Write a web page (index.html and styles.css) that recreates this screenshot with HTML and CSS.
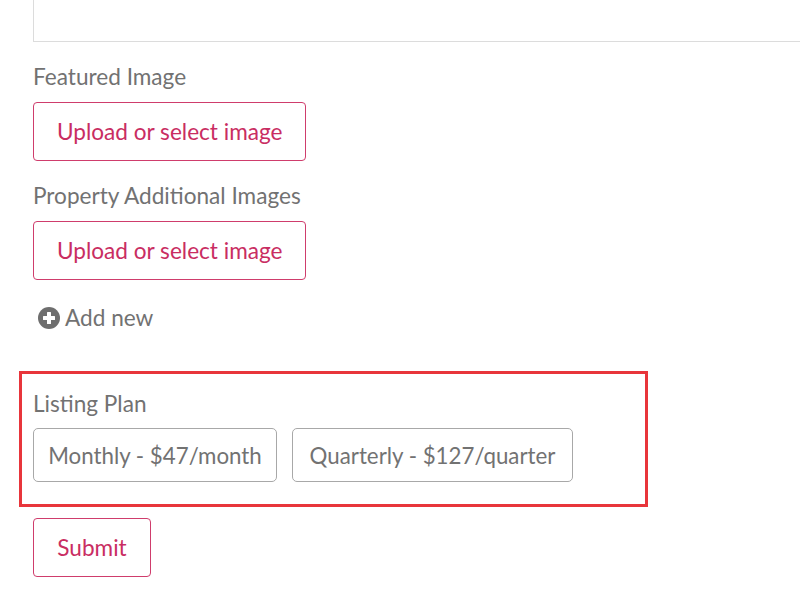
FILE: index.html
```html
<!DOCTYPE html>
<html>
<head>
<meta charset="utf-8">
<link rel="stylesheet" href="styles.css">
</head>
<body>
<div class="form">
  <div class="textarea"></div>
  <div class="label first">Featured Image</div>
  <button class="btn-upload">Upload or select image</button>
  <div class="label">Property Additional Images</div>
  <button class="btn-upload">Upload or select image</button>
  <div class="add-new">
    <svg class="plus" width="22" height="22" viewBox="0 0 22 22"><circle cx="11" cy="11" r="11" fill="#6e6e6e"/><rect x="5" y="9" width="12" height="4" rx="0.5" fill="#fff"/><rect x="9" y="5" width="4" height="12" rx="0.5" fill="#fff"/></svg>
    <span>Add new</span>
  </div>
  <div class="plan-box">
    <div class="label plan-label">Listing Plan</div>
    <div class="plans">
      <button class="plan monthly">Monthly - $47/month</button>
      <button class="plan quarterly">Quarterly - $127/quarter</button>
    </div>
  </div>
  <button class="btn-upload submit">Submit</button>
</div>
</body>
</html>
```

FILE: styles.css
```css
html, body {
  margin: 0;
  padding: 0;
  background: #fff;
  overflow: hidden;
}
body {
  font-family: Lato, "Liberation Sans", sans-serif;
  font-size: 22.6px;
  color: #727272;
}
.form {
  padding-left: 33px;
  display: flex;
  flex-direction: column;
  align-items: flex-start;
}
.textarea {
  margin-top: -60px;
  height: 102px;
  width: 800px;
  border: 1px solid #dcdcdc;
  box-sizing: border-box;
}
.label {
  line-height: 30px;
  margin-top: 20px;
  margin-bottom: 10px;
}
.btn-upload {
  font-family: inherit;
  font-size: 22.6px;
  color: #c92d62;
  background: #fff;
  border: 1.5px solid #cf3d6c;
  border-radius: 4px;
  height: 59px;
  padding: 0 23px;
  box-sizing: border-box;
  cursor: pointer;
}
.add-new {
  margin-top: 23px;
  display: flex;
  align-items: center;
  gap: 5px;
  line-height: 30px;
  padding-left: 5px;
}
.plus {
  display: block;
}
.plan-box {
  margin-top: 38px;
  margin-left: -14px;
  width: 629px;
  box-sizing: border-box;
  border: 3px solid #e8353b;
  padding: 0 11px 22px;
}
.plan-label {
  margin-top: 15px;
  margin-bottom: 9px;
}
.plans {
  display: flex;
  gap: 15px;
}
.plan {
  font-family: inherit;
  font-size: 22.3px;
  color: #727272;
  background: #fff;
  border: 1px solid #a8a8a8;
  border-radius: 5px;
  height: 54px;
  padding: 0 10px;
  box-sizing: border-box;
}
.monthly {
  width: 244px;
}
.quarterly {
  width: 281px;
}
.submit {
  margin-top: 11px;
  width: 118px;
}
```
